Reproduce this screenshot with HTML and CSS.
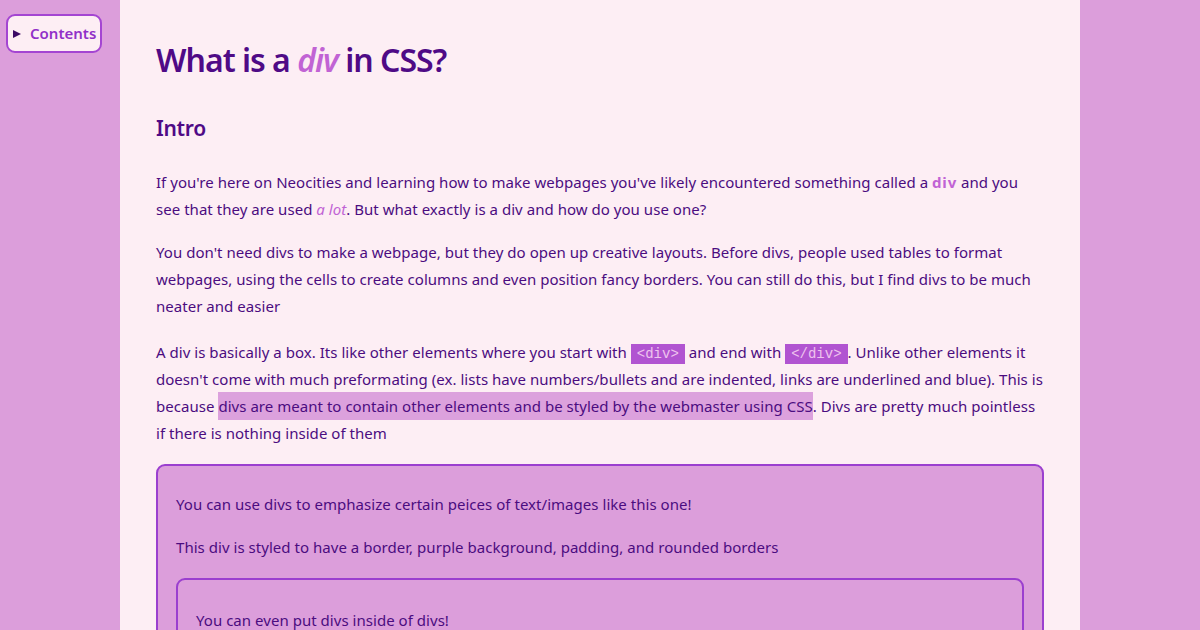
FILE: index.html
```html
<!DOCTYPE html>
<html lang="en">
<head>
<meta charset="utf-8">
<title>What is a div in CSS?</title>
<link rel="stylesheet" href="styles.css">
</head>
<body>
<details class="toc">
  <summary class="toc-summary">Contents</summary>
</details>
<main class="page">
  <h1 class="title">What is a <em class="accent">div</em> in CSS?</h1>
  <h2 class="section">Intro</h2>
  <p>If you're here on Neocities and learning how to make webpages you've likely encountered something called a <strong class="accent">div</strong> and you see that they are used <em class="accent">a lot</em>. But what exactly is a div and how do you use one?</p>
  <p>You don't need divs to make a webpage, but they do open up creative layouts. Before divs, people used tables to format webpages, using the cells to create columns and even position fancy borders. You can still do this, but I find divs to be much neater and easier</p>
  <p class="with-code">A div is basically a box. Its like other elements where you start with <code class="code">&lt;div&gt;</code> and end with <code class="code">&lt;/div&gt;</code>. Unlike other elements it doesn't come with much preformating (ex. lists have numbers/bullets and are indented, links are underlined and blue). This is because <mark class="mark">divs are meant to contain other elements and be styled by the webmaster using CSS</mark>. Divs are pretty much pointless if there is nothing inside of them</p>
  <div class="box">
    <p>You can use divs to emphasize certain peices of text/images like this one!</p>
    <p>This div is styled to have a border, purple background, padding, and rounded borders</p>
    <div class="box box-inner">
      <p>You can even put divs inside of divs!</p>
      <p>Divs can be styled however you like.</p>
    </div>
  </div>
</main>
</body>
</html>
```
FILE: styles.css
```css
html, body {
  margin: 0;
  padding: 0;
}
body {
  background: #dc9edb;
  font-family: "Noto Sans", "Open Sans", sans-serif;
  color: #4b0c80;
  font-size: 15px;
  line-height: 27px;
  letter-spacing: 0.035px;
  min-height: 630px;
}
.toc {
  position: fixed;
  left: 6px;
  top: 14px;
  background: #fdeef4;
  border: 2px solid #a445d2;
  border-radius: 9px;
  padding: 6px 4px 6px 5px;
}
.toc-summary {
  list-style: none;
  display: flex;
  align-items: center;
  font-weight: 600;
  color: #9130c8;
  font-size: 15px;
  line-height: 23px;
  letter-spacing: 0;
  cursor: pointer;
}
.toc-summary::-webkit-details-marker {
  display: none;
}
.toc-summary::before {
  content: "";
  width: 0;
  height: 0;
  border-left: 8px solid #3c0a66;
  border-top: 4.5px solid transparent;
  border-bottom: 4.5px solid transparent;
  margin-right: 9px;
}
.page {
  width: 888px;
  margin: 0 auto;
  background: #fdeef4;
  padding: 20px 36px 40px;
  min-height: 630px;
  box-sizing: content-box;
}
.title {
  font-size: 32px;
  line-height: 40px;
  margin: 20px 0 33px;
  color: #4f0a86;
  font-weight: 600;
  letter-spacing: -1px;
}
.section {
  font-size: 21px;
  line-height: 30px;
  margin: 0 0 26px;
  color: #4f0a86;
  font-weight: 600;
  letter-spacing: -0.3px;
}
.accent {
  color: #c163d4;
}
strong.accent {
  letter-spacing: 0.8px;
}
em.accent {
  font-weight: 400;
}
.title em.accent {
  font-weight: 600;
  letter-spacing: -1px;
}
p {
  margin: 16px 0;
}
.with-code {
  margin-top: 19px;
}
.code {
  font-family: "Liberation Mono", monospace;
  font-size: 14px;
  line-height: 16px;
  letter-spacing: 0;
  background: #b154d1;
  color: #eec3ee;
  padding: 2px 6px;
}
.mark {
  background: #dca1dd;
  color: inherit;
  padding: 4px 0;
}
.box {
  background: #dc9edb;
  border: 2px solid #9b3fcf;
  border-radius: 9px;
  padding: 0 18px;
  margin-top: 17px;
}
.box > p:first-child {
  margin-top: 25px;
}
.box-inner > p:first-child {
  margin-top: 27px;
}
```
